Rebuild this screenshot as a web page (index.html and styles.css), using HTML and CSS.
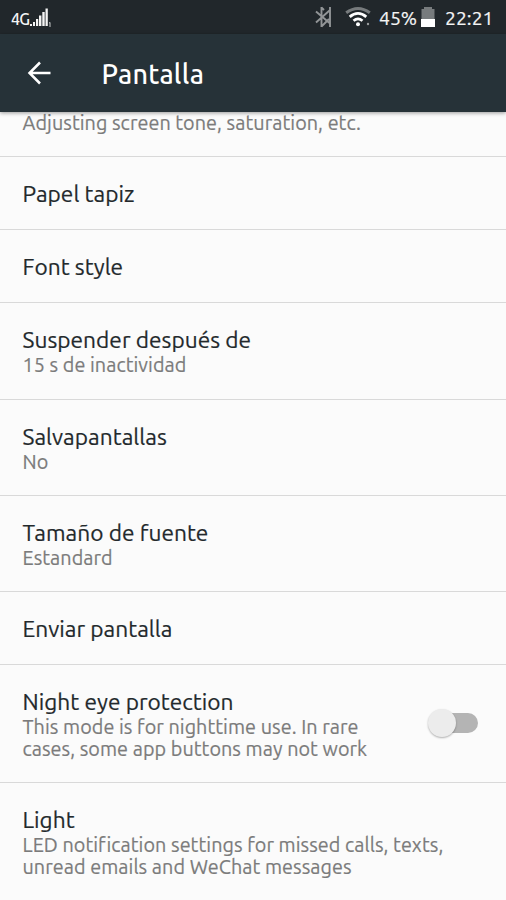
FILE: index.html
```html
<!DOCTYPE html>
<html lang="es">
<head>
<meta charset="utf-8">
<title>Pantalla</title>
<link rel="stylesheet" href="styles.css">
</head>
<body>
<div class="statusbar">
  <span class="network">4G</span>
  <svg class="signal" width="24" height="22" viewBox="0 0 24 22">
    <path d="M1 18h2v2H1zM4 16h2v4H4zM7 13h2.200v7H7zM10 9.500h2.400V20H10zM13.300 6h2.400v14h-2.400zM16.500 2.500h2.300V20h-2.300z" fill="#f4f4f4"/>
    <path d="M20 17.200l1-.8v4.600" stroke="#c5c7c8" fill="none"/>
  </svg>
  <svg class="bluetooth" width="18" height="22" viewBox="0 0 18 22" fill="none" stroke="#929597" stroke-width="1.900">
    <path d="M6.500 1v20M1 5.500L14.500 17M14.500 4.500L1 16.500M15 1v20M6.500 1.500L9 4M6.500 20.500L14 13"/>
  </svg>
  <svg class="wifi" width="26" height="22" viewBox="0 0 26 22" fill="none">
    <path d="M1.200 6.800Q13-1.800 24.800 6.800" stroke="#777b7d" stroke-width="3"/>
    <path d="M4.700 10.800Q13 4 21.300 10.800M8.500 14.800Q13 11 17.500 14.800" stroke="#fff" stroke-width="2.800"/>
    <circle cx="13" cy="18.300" r="2" fill="#fff"/><circle cx="23" cy="18" r="1.200" fill="#999c9d"/>
  </svg>
  <span class="percent">45%</span>
  <svg class="battery" width="14" height="22" viewBox="0 0 14 22">
    <path d="M.5 3H3V1h8v2h2.500v10H.5z" fill="#777b7d"/><path d="M0 13h14v8H0z" fill="#fff"/>
  </svg>
  <span class="clock">22:21</span>
</div>
<header class="appbar">
  <svg class="back" width="24" height="24" viewBox="0 0 24 24" fill="none" stroke="#fff" stroke-width="2.500"><path d="M13 1.500L2.500 12 13 22.500M2.500 12H23.500"/></svg>
  <h1 class="heading">Pantalla</h1>
</header>
<main class="list">
  <section class="row row-first"><p class="sub">Adjusting screen tone, saturation, etc.</p></section>
  <section class="row"><h2 class="title">Papel tapiz</h2></section>
  <section class="row"><h2 class="title">Font style</h2></section>
  <section class="row row-double row-timeout"><h2 class="title">Suspender después de</h2><p class="sub">15 s de inactividad</p></section>
  <section class="row row-double"><h2 class="title">Salvapantallas</h2><p class="sub">No</p></section>
  <section class="row row-double"><h2 class="title">Tamaño de fuente</h2><p class="sub">Estandard</p></section>
  <section class="row"><h2 class="title">Enviar pantalla</h2></section>
  <section class="row row-triple row-switch">
    <div>
      <h2 class="title">Night eye protection</h2>
      <p class="sub">This mode is for nighttime use. In rare<br>cases, some app buttons may not work</p>
    </div>
    <div class="switch"><span class="thumb"></span></div>
  </section>
  <section class="row row-triple row-last"><h2 class="title">Light</h2><p class="sub">LED notification settings for missed calls, texts,<br>unread emails and WeChat messages</p></section>
</main>
</body>
</html>
```
FILE: styles.css
```css
* { box-sizing: border-box; }
body { margin: 0; height: 900px; overflow: hidden; background: #fbfbfb; font-family: Ubuntu, "Noto Sans", sans-serif; }

.statusbar { display: flex; align-items: center; height: 34px; padding-left: 11px; background: #21272b; color: #f5f5f5; white-space: nowrap; }
.statusbar svg { flex: none; }
.network { width: 18px; font: 500 16px/20px Ubuntu, Roboto, sans-serif; letter-spacing: -.8px; padding-top: 3px; }
.signal { margin-top: -1px; }
.bluetooth { margin-left: 262px; }
.wifi { margin-left: 12px; }
.percent, .clock { font-size: 19.4px; line-height: 24px; padding-top: 1px; -webkit-text-stroke: .2px currentColor; }
.percent { width: 38px; margin-left: 8px; }
.battery { margin-left: 4px; }
.clock { margin-left: 10px; }

.appbar { position: relative; display: flex; align-items: center; height: 78px; padding-left: 27px; background: #263238; color: #fff; box-shadow: 0 1px 4px rgba(0, 0, 0, .4); }
.heading { margin: 2px 0 0 50.5px; font-size: 27px; line-height: 34px; font-weight: 500; letter-spacing: .25px; }

.row { height: 73px; padding: 23px 0 0 22.5px; border-bottom: 1px solid #d9d9d9; white-space: nowrap; }
.row-first { height: 45px; padding-top: 0; }
.row-double { height: 96px; }
.row-timeout { height: 97px; }
.row-triple { height: 118px; }
.row-last { border-bottom: 0; }
.row-switch { display: flex; justify-content: space-between; padding-right: 28px; }

.title, .sub { margin: 0; font-weight: 400; }
.title { font-size: 22.7px; line-height: 28px; letter-spacing: .02px; color: #23292c; -webkit-text-stroke: .2px currentColor; }
.sub { font-size: 19.8px; line-height: 22px; letter-spacing: .06px; color: #7b7b7b; -webkit-text-stroke: .2px currentColor; }

.switch { position: relative; width: 43px; height: 20px; margin-top: 25px; border-radius: 10px; background: #b4b4b4; }
.thumb { position: absolute; left: -7px; top: -4px; width: 28px; height: 28px; border-radius: 50%; background: #ececec; box-shadow: 0 1px 2px rgba(0, 0, 0, .3); }
```
